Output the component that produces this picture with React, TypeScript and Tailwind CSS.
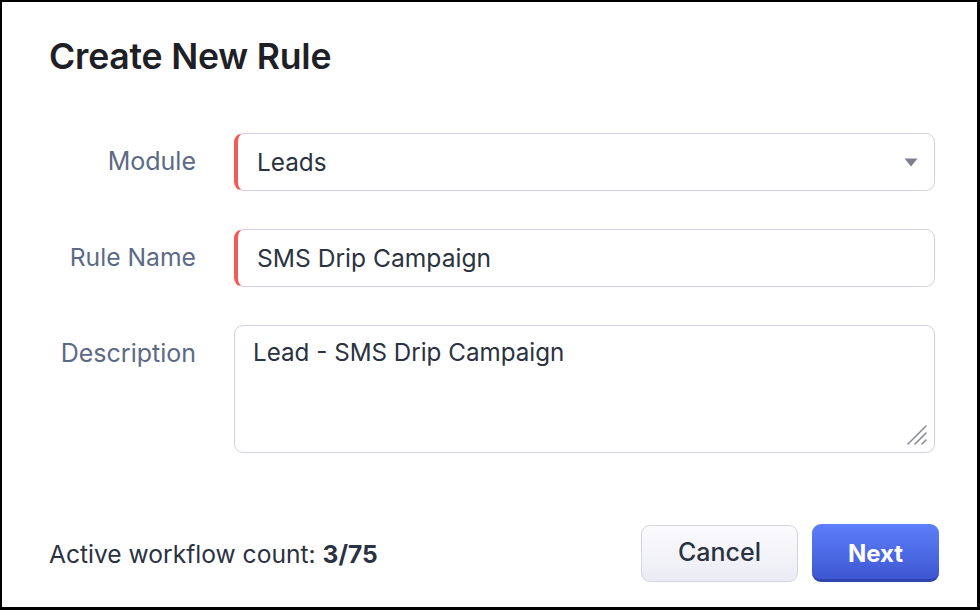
import React from "react";

export default function App() {
  return (
    <div
      className="w-[980px] h-[610px] bg-white border-black border-t-2 border-l-2 border-r-[3px] border-b-[3px] flex flex-col"
      style={{ fontFamily: "Inter, 'Noto Sans', sans-serif" }}
    >
      <h1 className="pl-[47px] pt-[33px] text-[35.6px] leading-[44px] font-semibold text-[#1f2026] tracking-[-0.2px]">
        Create New Rule
      </h1>

      <div className="mt-[54px] pl-[47px] pr-[42px] grid grid-cols-[147px_1fr] gap-x-[38px] gap-y-[38px] items-start">
        <label className="h-[58px] flex items-center justify-end text-[25px] text-[#5c6a86]">Module</label>
        <div className="h-[58px] rounded-[9px] border border-[#d2d0e2] border-l-[4px] border-l-[#f45a56] flex items-center pl-[19px] pr-[16px]">
          <span className="flex-1 text-[24.3px] text-[#2b3241]">Leads</span>
          <svg width="14" height="9" viewBox="0 0 14 9">
            <path d="M0.5 0.5 H13.5 L7 8.5 Z" fill="#7b7e8c" />
          </svg>
        </div>

        <label className="h-[58px] flex items-center justify-end text-[24.7px] text-[#5c6a86]">Rule Name</label>
        <div className="h-[58px] rounded-[9px] border border-[#d2d0e2] border-l-[4px] border-l-[#f45a56] flex items-center pl-[19px]">
          <span className="text-[24.6px] text-[#2b3241]">SMS Drip Campaign</span>
        </div>

        <label className="h-[58px] flex items-center justify-end text-[25px] text-[#5c6a86]">Description</label>
        <div className="relative h-[128px] rounded-[9px] border border-[#d2d0e2] pl-[18px] pt-[11px]">
          <span className="text-[24.2px] text-[#2b3241] leading-[32px]">Lead - SMS Drip Campaign</span>
          <svg width="22" height="22" viewBox="0 0 22 22" className="absolute right-[6px] bottom-[6px]">
            <path d="M2 20 L20 2 M9 20 L20 9 M16 20 L20 16" stroke="#8a8c96" strokeWidth="1.6" strokeLinecap="round" />
          </svg>
        </div>
      </div>

      <div className="mt-auto pl-[47px] pr-[38px] pb-[25px] flex items-center">
        <div className="flex-1 text-[24.6px] text-[#2b3241] pt-[3px]">
          Active workflow count: <span className="font-bold">3/75</span>
        </div>
        <button className="w-[157px] h-[57px] rounded-[9px] border border-[#d3d3e2] bg-gradient-to-b from-[#fbfbfe] to-[#ebebf4] text-[25px] font-medium text-[#2b3241]">
          Cancel
        </button>
        <button className="ml-[14px] w-[127px] h-[58px] rounded-[9px] bg-gradient-to-b from-[#5e7ffa] to-[#3e57d2] border-b-[3px] border-[#2f45ad] pt-[4px] text-[24px] font-bold text-white">
          Next
        </button>
      </div>
    </div>
  );
}
